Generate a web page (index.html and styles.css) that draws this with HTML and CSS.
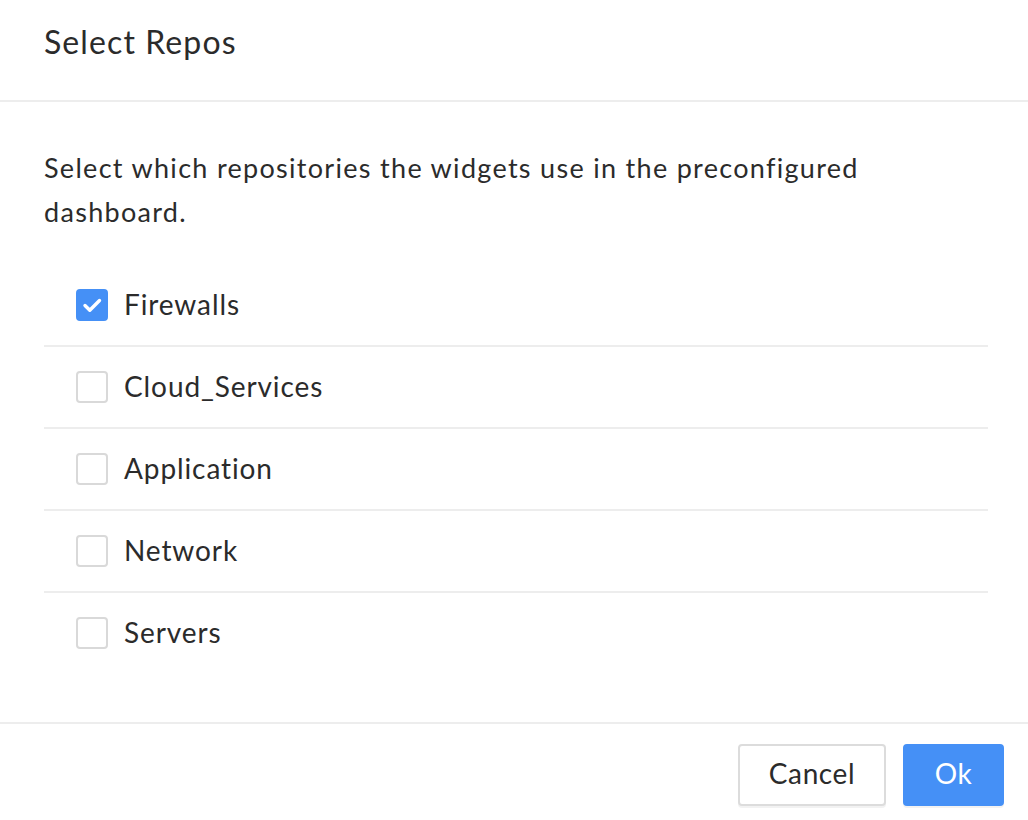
FILE: index.html
```html
<!DOCTYPE html>
<html>
<head>
<meta charset="utf-8">
<link rel="stylesheet" href="styles.css">
</head>
<body>
<div class="modal">
  <div class="modal-header">
    <h1 class="title">Select Repos</h1>
  </div>
  <div class="modal-body">
    <p class="desc">Select which repositories the widgets use in the preconfigured dashboard.</p>
    <ul class="repo-list">
      <li class="repo-row">
        <span class="check checked">
          <svg viewBox="0 0 32 32" width="32" height="32"><path d="M9 16.5l4.8 4.8L23.5 11.5" fill="none" stroke="#fff" stroke-width="3.4" stroke-linecap="round" stroke-linejoin="round"/></svg>
        </span>
        <span class="label">Firewalls</span>
      </li>
      <li class="repo-row"><span class="check"></span><span class="label">Cloud_Services</span></li>
      <li class="repo-row"><span class="check"></span><span class="label">Application</span></li>
      <li class="repo-row"><span class="check"></span><span class="label">Network</span></li>
      <li class="repo-row last"><span class="check"></span><span class="label">Servers</span></li>
    </ul>
  </div>
  <div class="modal-footer">
    <button class="btn btn-default">Cancel</button>
    <button class="btn btn-primary">Ok</button>
  </div>
</div>
</body>
</html>
```
FILE: styles.css
```css
html, body {
  margin: 0;
  padding: 0;
  background: #fff;
}
body {
  font-family: Lato, "Noto Sans", sans-serif;
  color: #2b2b2b;
}
.modal {
  width: 1028px;
  height: 820px;
  display: flex;
  flex-direction: column;
}
.modal-header {
  height: 100px;
  border-bottom: 2px solid #ededed;
  padding: 0 44px;
  display: flex;
  align-items: center;
  box-sizing: content-box;
}
.title {
  margin: 0 0 17px;
  font-size: 32px;
  font-weight: 400;
  letter-spacing: 1.1px;
}
.modal-body {
  padding: 44px 40px 49px 44px;
}
.desc {
  margin: 0 0 31px;
  font-size: 27px;
  line-height: 44px;
  letter-spacing: 1.3px;
  max-width: 880px;
}
.repo-list {
  list-style: none;
  margin: 0;
  padding: 0;
}
.repo-row {
  height: 80px;
  border-bottom: 2px solid #ededed;
  display: flex;
  align-items: center;
  padding-left: 32px;
  gap: 16px;
}
.repo-row.last {
  border-bottom: none;
}
.check {
  width: 32px;
  height: 32px;
  box-sizing: border-box;
  border: 2px solid #d9d9d9;
  border-radius: 4px;
  background: #fff;
  display: flex;
  align-items: center;
  justify-content: center;
  flex: none;
}
.check.checked {
  background: #4590f6;
  border-color: #4590f6;
}
.check svg {
  display: block;
  flex: none;
}
.label {
  font-size: 28px;
  letter-spacing: 0.9px;
  padding-bottom: 3px;
}
.modal-footer {
  border-top: 2px solid #ededed;
  padding: 20px 24px 0;
  display: flex;
  justify-content: flex-end;
  gap: 17px;
}
.btn {
  height: 62px;
  padding: 0 0 5px;
  border-radius: 4px;
  font-family: Lato, "Noto Sans", sans-serif;
  font-size: 28px;
  letter-spacing: 0.6px;
  cursor: pointer;
  box-shadow: 0 2px 0 rgba(0,0,0,0.05);
}
.btn-default {
  width: 148px;
  background: #fff;
  border: 2px solid #dcdcdc;
  color: #2b2b2b;
}
.btn-primary {
  width: 101px;
  background: #4590f6;
  border: 2px solid #4590f6;
  color: #fff;
}
```
